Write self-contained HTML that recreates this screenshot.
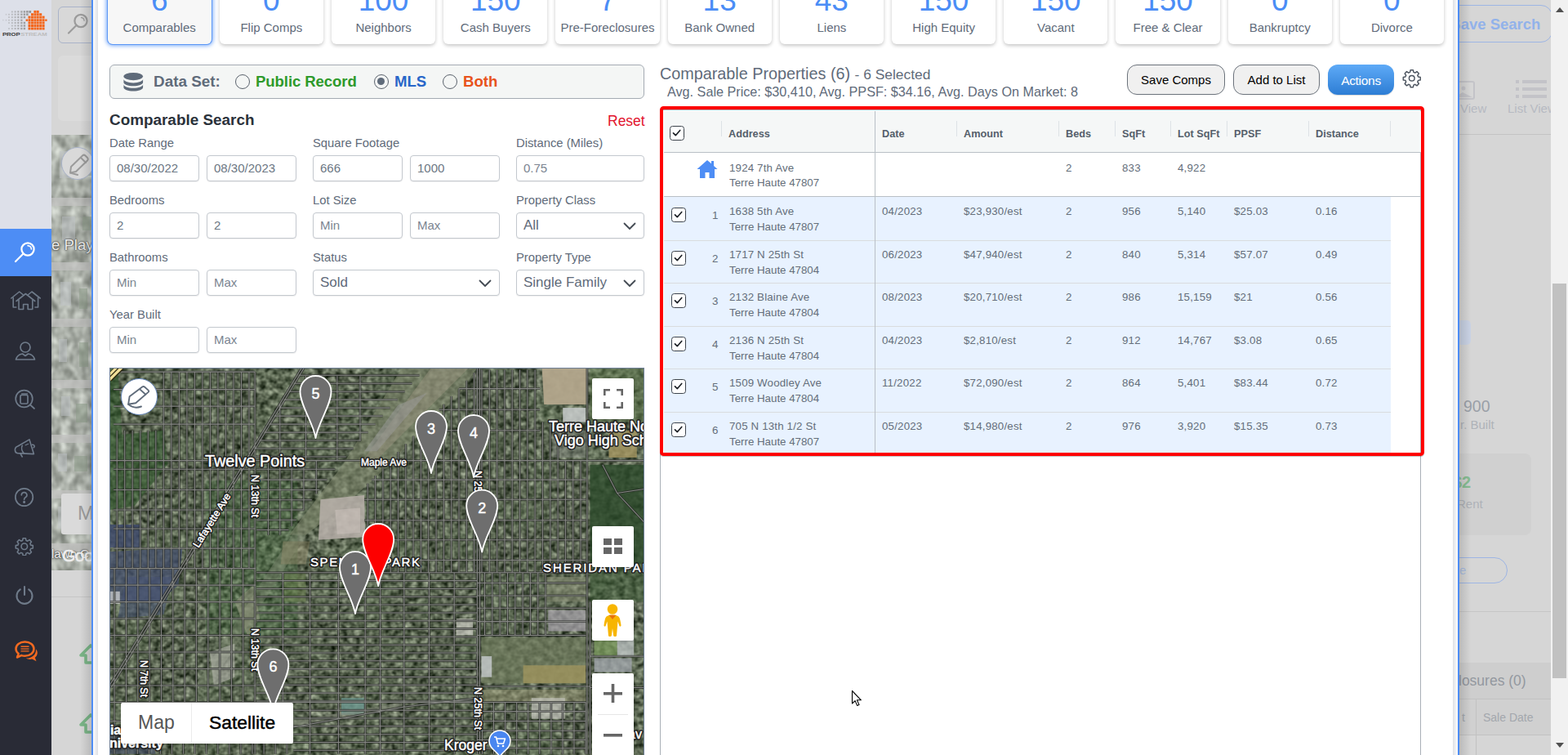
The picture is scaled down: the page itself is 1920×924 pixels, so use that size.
<!DOCTYPE html>
<html lang="en">
<head>
<meta charset="utf-8">
<title>PropStream - Comparables</title>
<style>
*{box-sizing:border-box;margin:0;padding:0}
html,body{width:1920px;height:924px;overflow:hidden;background:#d6d6d6;font-family:"Liberation Sans",Arial,sans-serif;color:#5f6b7a}
.abs{position:absolute}
#page{position:absolute;left:0;top:0;width:1920px;height:924px;overflow:hidden;background:#d6d6d6}
/* sidebar */
#side{position:absolute;left:0;top:0;width:63px;height:924px;background:#292b36}
#side .top{position:absolute;left:0;top:0;width:63px;height:280px;background:#dde0e9}
#side .act{position:absolute;left:0;top:280px;width:63px;height:58px;background:#4d8df5}
#side svg{position:absolute}
/* modal */
#modal{position:absolute;left:112px;top:-40px;width:1675px;height:1000px;background:#fff;border:2px solid #4d8df5;border-top:none}
#modal .lg{position:absolute;left:0;top:0;width:6px;height:1000px;background:linear-gradient(90deg,#fdfdfd,#f1f2f5 35%,#dfe1e5)}
#modal .rg{position:absolute;right:0;top:0;width:6px;height:1000px;background:linear-gradient(90deg,#dfe1e5,#f4f5f8 70%,#fdfdfd)}
.card{position:absolute;top:-30px;height:83.700px;width:127.400px;background:#fff;border-radius:6px;box-shadow:0 2px 4px rgba(0,0,0,.22);text-align:center}
.card .n{position:absolute;left:0;right:0;top:10.800px;font-size:37px;line-height:40px;color:#4b8df6}
.card .l{position:absolute;left:-6px;right:-6px;top:53.500px;font-size:15px;line-height:20px;color:#5f6b7a;white-space:nowrap}
.card.sel{background:#f7f7f7;box-shadow:0 0 0 1px #5b97f6,0 0 5px 2px rgba(77,141,245,.75)}
.lbl{position:absolute;font-size:14.800px;line-height:18px;color:#5f6b7a;white-space:nowrap}
.inp{position:absolute;height:32px;border:1px solid #c3c8ce;border-radius:4px;background:#fff;font-size:15px;line-height:30px;padding-left:8px;color:#6c7784;box-shadow:0 1px 1px rgba(0,0,0,.06);white-space:nowrap}
.inp.ph{color:#7b8591}
.inp.sel{font-size:17px;color:#5f6b7a}
.inp.sel svg{position:absolute;right:9px;top:11px}
.btn{position:absolute;top:79px;height:37px;border:1px solid #6b727b;border-radius:12px;background:#f0f0f0;color:#000;font-size:15px;line-height:35px;text-align:center}
/* table */
.th{position:absolute;top:0;height:49px;font-weight:bold;font-size:12.700px;line-height:49px;color:#555f6b;white-space:nowrap}
.sep{position:absolute;top:8px;width:1px;height:16px;background:#dde2e6}
.row{position:absolute;left:0;width:926px;height:53px}
.row.s{background:#fff}
.row .bg{position:absolute;left:0;top:0;width:890px;height:100%;background:#e8f2ff;border-bottom:1px solid #d9dcde}
.c{position:absolute;top:7px;font-size:13.300px;line-height:19px;color:#646e7a;white-space:nowrap}
.cb{position:absolute;width:18px;height:18px;border:1.500px solid #3c434b;border-radius:3.500px;background:#fff}
.cb svg{position:absolute;left:1px;top:1px}
</style>
</head>
<body>
<div id="page">
<div class="abs" style="left:71px;top:8px;width:60px;height:45px;border:1px solid #a9b3c9;border-radius:6px;background:#d8d8d8"></div><svg class="abs" style="left:80px;top:13px" width="32" height="32" viewBox="0 0 32 32" fill="none" stroke="#9b9b9b" stroke-width="2.2" stroke-linecap="round"><circle cx="19" cy="12.500" r="7.600"/><path d="M13.500 18L4 27.500"/><path d="M19.500 8.500a4 4 0 0 1 3.600 3.800" stroke-width="1.300"/></svg><div class="abs" style="left:71px;top:68px;width:60px;height:80px;border-radius:6px;background:#dbdbdb"></div><div class="abs" style="left:63px;top:165px;width:60px;height:533px;background:#a9aba6;overflow:hidden"><svg width="60" height="533" viewBox="0 0 60 533"><defs><filter id="bsat" x="0" y="0" width="100%" height="100%" color-interpolation-filters="sRGB"><feTurbulence type="fractalNoise" baseFrequency="0.09 0.07" numOctaves="2" seed="3"/><feColorMatrix type="matrix" values="0.55 0 0 0 0.39  0.55 0 0 0 0.41  0.55 0 0 0 0.38  0 0 0 0 1"/></filter></defs><rect width="60" height="533" filter="url(#bsat)"/><rect x="0" y="77" width="60" height="10" fill="#c2c2c0" opacity=".75"/><rect x="0" y="156" width="60" height="10" fill="#c2c2c0" opacity=".75"/><rect x="0" y="225" width="60" height="10" fill="#c2c2c0" opacity=".75"/><rect x="0" y="300" width="60" height="10" fill="#c2c2c0" opacity=".75"/><rect x="0" y="367" width="60" height="10" fill="#c2c2c0" opacity=".75"/><rect x="0" y="435" width="60" height="10" fill="#c2c2c0" opacity=".75"/><rect x="0" y="500" width="60" height="10" fill="#c2c2c0" opacity=".75"/><rect x="10" y="20" width="15" height="33" fill="#c0c4c8" opacity=".5"/><rect x="38" y="34" width="14" height="16" fill="#8c9a88" opacity=".55"/><rect x="13" y="100" width="16" height="29" fill="#c0c4c8" opacity=".5"/><rect x="38" y="100" width="11" height="17" fill="#8c9a88" opacity=".55"/><rect x="11" y="180" width="13" height="29" fill="#c0c4c8" opacity=".5"/><rect x="34" y="188" width="10" height="25" fill="#8c9a88" opacity=".55"/><rect x="9" y="250" width="10" height="28" fill="#c0c4c8" opacity=".5"/><rect x="34" y="254" width="11" height="30" fill="#8c9a88" opacity=".55"/><rect x="12" y="320" width="11" height="24" fill="#c0c4c8" opacity=".5"/><rect x="30" y="329" width="14" height="23" fill="#8c9a88" opacity=".55"/><rect x="8" y="390" width="11" height="22" fill="#c0c4c8" opacity=".5"/><rect x="28" y="393" width="16" height="19" fill="#8c9a88" opacity=".55"/><rect x="8" y="455" width="16" height="27" fill="#c0c4c8" opacity=".5"/><rect x="32" y="460" width="11" height="24" fill="#8c9a88" opacity=".55"/></svg></div><div class="abs" style="left:75px;top:180px;width:40px;height:40px;border-radius:50%;background:#d9d9d9;border:1px solid #a9b3c9"></div><svg class="abs" style="left:82px;top:187px" width="30" height="28" viewBox="0 0 30 28" fill="none" stroke="#9b9b9b" stroke-width="2" stroke-linejoin="round" stroke-linecap="round"><path d="M5 17L19 3.500c1-1 2.500-1 3.500 0l2.500 2.500c1 1 1 2.500 0 3.500L11 23l-7 1.500z"/><path d="M17 6l6 6"/><path d="M4 24.500l9 2.500"/></svg><div class="abs" style="left:63px;top:289px;font-size:18.500px;color:#ececec;text-shadow:0 0 2px #444,0 0 2px #555,0 0 1px #444;white-space:nowrap">e Playl</div><div class="abs" style="left:75px;top:604px;width:50px;height:50px;border-radius:3px;background:#dadada"></div><div class="abs" style="left:95px;top:614px;font-size:24px;color:#9c9c9c">M</div><div class="abs" style="left:63px;top:669px;font-size:15px;color:#eee;text-shadow:0 0 2px #444,0 0 2px #444;white-space:nowrap">lawn C</div><div class="abs" style="left:76px;top:668px;font-size:21px;color:#efefef;white-space:nowrap;letter-spacing:-.5px;-webkit-text-stroke:.5px #efefef">Goo</div><div class="abs" style="left:63px;top:730px;width:60px;height:1px;background:#c6c6c6"></div><svg class="abs" style="left:96px;top:788px" width="26" height="26" viewBox="0 0 26 26" fill="none" stroke="#7ab587" stroke-width="3.600" stroke-linejoin="round"><path d="M3 14L15 2l12 12h-5v9H9v-9z"/></svg><svg class="abs" style="left:96px;top:873px" width="26" height="26" viewBox="0 0 26 26" fill="none" stroke="#7ab587" stroke-width="3.600" stroke-linejoin="round"><path d="M3 14L15 2l12 12h-5v9H9v-9z"/></svg><div class="abs" style="left:98px;top:0;width:14px;height:924px;background:linear-gradient(90deg,rgba(0,0,0,0),rgba(0,0,0,.13))"></div><div class="abs" style="left:1740px;top:6px;width:161px;height:46px;border:1px solid #9db5e4;border-radius:14px"></div><div class="abs" style="left:1776.300px;top:18px;font-size:18.500px;font-weight:bold;color:#92b2ea;white-space:nowrap;line-height:24px">Save Search</div><svg class="abs" style="left:1768px;top:99px" width="40" height="24" viewBox="0 0 40 24" fill="none" stroke="#c3c3c8" stroke-width="2"><rect x="1" y="1" width="36" height="21" rx="2"/><circle cx="24" cy="9" r="2.500" fill="#c3c3c8" stroke="none"/><path d="M3 20l9-8 6 5 5-3 12 6z" fill="#c3c3c8" stroke="none"/></svg><svg class="abs" style="left:1856px;top:98px" width="40" height="24" viewBox="0 0 40 24" fill="#c3c3c8"><rect x="0" y="0" width="4" height="4"/><rect x="8" y="0" width="30" height="4"/><rect x="0" y="9" width="4" height="4"/><rect x="8" y="9" width="30" height="4"/><rect x="0" y="18" width="4" height="4"/><rect x="8" y="18" width="30" height="4"/></svg><div class="abs" style="left:1788px;top:124px;font-size:15px;color:#b6bac2;white-space:nowrap;line-height:18px">View</div><div class="abs" style="left:1846px;top:124px;font-size:15px;color:#b6bac2;white-space:nowrap;line-height:18px">List View</div><div class="abs" style="left:1787px;top:164px;width:112px;height:1px;background:#c3c3c3"></div><div class="abs" style="left:1760px;top:392px;width:41px;height:30px;border-radius:5px;background:#c9d2e4"></div><div class="abs" style="left:1792px;top:485px;font-size:19.5px;color:#9aa0a8;line-height:24px">900</div><div class="abs" style="left:1788px;top:511px;font-size:15px;color:#aeb2b8;white-space:nowrap;line-height:18px">r. Built</div><div class="abs" style="left:1700px;top:555px;width:175px;height:100px;border-radius:8px;background:#d0d0d0"></div><div class="abs" style="left:1779px;top:578px;font-size:20px;font-weight:bold;color:#87bd93;line-height:24px">$2</div><div class="abs" style="left:1784px;top:608px;font-size:15px;color:#aeb2b8;line-height:18px">Rent</div><div class="abs" style="left:1700px;top:682px;width:146px;height:32px;border:1px solid #9db5e4;border-radius:16px"></div><div class="abs" style="left:1787px;top:689px;font-size:15px;color:#a9bce0;line-height:18px">e</div><div class="abs" style="left:1787px;top:748px;width:112px;height:1px;background:#c6c6c6"></div><div class="abs" style="left:1787px;top:811px;width:112px;height:44px;background:#cecece"></div><div class="abs" style="left:1786px;top:822px;font-size:17.500px;color:#93989f;white-space:nowrap;line-height:22px">losures (0)</div><div class="abs" style="left:1787px;top:855px;width:112px;height:45px;background:#d0d0d0;border-top:1px solid #c2c2c2;border-bottom:1px solid #c2c2c2"></div><div class="abs" style="left:1807px;top:856px;width:1px;height:68px;background:#c2c2c2"></div><div class="abs" style="left:1790px;top:869px;font-size:14px;color:#a3a7ad;line-height:18px">t</div><div class="abs" style="left:1816px;top:869px;font-size:14px;color:#a3a7ad;white-space:nowrap;line-height:18px">Sale Date</div><div class="abs" style="left:1787px;top:0;width:14px;height:924px;background:linear-gradient(90deg,rgba(0,0,0,.13),rgba(0,0,0,0))"></div><div class="abs" style="left:1899px;top:0;width:21px;height:924px;background:#f1f1f1"></div><div class="abs" style="left:1901px;top:347px;width:17px;height:483px;background:#c1c1c1"></div><svg class="abs" style="left:1903.500px;top:8px" width="12" height="8" viewBox="0 0 12 8"><path d="M6 1l5 6H1z" fill="#505050"/></svg><svg class="abs" style="left:1903.500px;top:908px" width="12" height="8" viewBox="0 0 12 8"><path d="M6 7l5-6H1z" fill="#505050"/></svg>
<div id="side"><div class="top"></div><div class="act"></div><svg class="abs" style="left:0;top:0" width="63" height="50" viewBox="0 0 63 50"><rect x="13.9" y="13.5" width="1.9" height="1.9" fill="#8f8f8f" opacity="0.47"/><rect x="17.6" y="13.4" width="2.0" height="2.0" fill="#8f8f8f" opacity="0.56"/><rect x="21.3" y="13.3" width="2.1" height="2.1" fill="#8f8f8f" opacity="0.65"/><rect x="25.2" y="13.3" width="2.3" height="2.3" fill="#8f8f8f" opacity="0.73"/><rect x="28.7" y="13.2" width="2.4" height="2.4" fill="#8f8f8f" opacity="0.82"/><rect x="32.1" y="13.1" width="2.5" height="2.5" fill="#8f8f8f" opacity="0.90"/><rect x="35.4" y="13.1" width="2.7" height="2.7" fill="#8f8f8f" opacity="0.98"/><rect x="6.7" y="16.9" width="1.6" height="1.6" fill="#8f8f8f" opacity="0.30"/><rect x="10.1" y="16.8" width="1.8" height="1.8" fill="#8f8f8f" opacity="0.39"/><rect x="13.9" y="16.8" width="1.9" height="1.9" fill="#8f8f8f" opacity="0.47"/><rect x="17.6" y="16.7" width="2.0" height="2.0" fill="#8f8f8f" opacity="0.56"/><rect x="21.3" y="16.6" width="2.1" height="2.1" fill="#8f8f8f" opacity="0.65"/><rect x="25.2" y="16.6" width="2.3" height="2.3" fill="#8f8f8f" opacity="0.73"/><rect x="28.7" y="16.5" width="2.4" height="2.4" fill="#8f8f8f" opacity="0.82"/><rect x="32.1" y="16.4" width="2.5" height="2.5" fill="#8f8f8f" opacity="0.90"/><rect x="10.1" y="20.2" width="1.8" height="1.8" fill="#8f8f8f" opacity="0.39"/><rect x="13.9" y="20.2" width="1.9" height="1.9" fill="#8f8f8f" opacity="0.47"/><rect x="17.6" y="20.1" width="2.0" height="2.0" fill="#8f8f8f" opacity="0.56"/><rect x="21.3" y="20.0" width="2.1" height="2.1" fill="#8f8f8f" opacity="0.65"/><rect x="25.2" y="20.0" width="2.3" height="2.3" fill="#8f8f8f" opacity="0.73"/><rect x="28.7" y="19.9" width="2.4" height="2.4" fill="#8f8f8f" opacity="0.82"/><rect x="3.1" y="23.9" width="1.5" height="1.5" fill="#8f8f8f" opacity="0.22"/><rect x="6.7" y="23.9" width="1.6" height="1.6" fill="#8f8f8f" opacity="0.30"/><rect x="10.1" y="23.8" width="1.8" height="1.8" fill="#8f8f8f" opacity="0.39"/><rect x="13.9" y="23.8" width="1.9" height="1.9" fill="#8f8f8f" opacity="0.47"/><rect x="17.6" y="23.7" width="2.0" height="2.0" fill="#8f8f8f" opacity="0.56"/><rect x="21.3" y="23.6" width="2.1" height="2.1" fill="#8f8f8f" opacity="0.65"/><rect x="25.2" y="23.6" width="2.3" height="2.3" fill="#8f8f8f" opacity="0.73"/><rect x="10.1" y="27.1" width="1.8" height="1.8" fill="#8f8f8f" opacity="0.39"/><rect x="13.9" y="27.1" width="1.9" height="1.9" fill="#8f8f8f" opacity="0.47"/><rect x="17.6" y="27.0" width="2.0" height="2.0" fill="#8f8f8f" opacity="0.56"/><rect x="21.3" y="26.9" width="2.1" height="2.1" fill="#8f8f8f" opacity="0.65"/><rect x="25.2" y="26.9" width="2.3" height="2.3" fill="#8f8f8f" opacity="0.73"/><rect x="28.7" y="26.8" width="2.4" height="2.4" fill="#8f8f8f" opacity="0.82"/><rect x="13.9" y="30.6" width="1.9" height="1.9" fill="#8f8f8f" opacity="0.47"/><rect x="17.6" y="30.5" width="2.0" height="2.0" fill="#8f8f8f" opacity="0.56"/><rect x="21.3" y="30.4" width="2.1" height="2.1" fill="#8f8f8f" opacity="0.65"/><rect x="25.2" y="30.4" width="2.3" height="2.3" fill="#8f8f8f" opacity="0.73"/><rect x="28.7" y="30.3" width="2.4" height="2.4" fill="#8f8f8f" opacity="0.82"/><rect x="10.1" y="34.1" width="1.8" height="1.8" fill="#8f8f8f" opacity="0.39"/><rect x="13.9" y="34.1" width="1.9" height="1.9" fill="#8f8f8f" opacity="0.47"/><rect x="17.6" y="34.0" width="2.0" height="2.0" fill="#8f8f8f" opacity="0.56"/><rect x="21.3" y="33.9" width="2.1" height="2.1" fill="#8f8f8f" opacity="0.65"/><rect x="25.2" y="33.9" width="2.3" height="2.3" fill="#8f8f8f" opacity="0.73"/><rect x="28.7" y="33.8" width="2.4" height="2.4" fill="#8f8f8f" opacity="0.82"/><rect x="41.4" y="12.9" width="3.0" height="3.0" fill="#f4661b"/><rect x="44.7" y="12.9" width="3.0" height="3.0" fill="#f4661b"/><rect x="38.0" y="16.2" width="3.0" height="3.0" fill="#f4661b"/><rect x="41.4" y="16.2" width="3.0" height="3.0" fill="#f4661b"/><rect x="44.7" y="16.2" width="3.0" height="3.0" fill="#f4661b"/><rect x="48.2" y="16.2" width="3.0" height="3.0" fill="#f4661b"/><rect x="34.5" y="19.6" width="3.0" height="3.0" fill="#f4661b"/><rect x="38.0" y="19.6" width="3.0" height="3.0" fill="#f4661b"/><rect x="41.4" y="19.6" width="3.0" height="3.0" fill="#f4661b"/><rect x="44.7" y="19.6" width="3.0" height="3.0" fill="#f4661b"/><rect x="48.2" y="19.6" width="3.0" height="3.0" fill="#f4661b"/><rect x="51.6" y="19.6" width="3.0" height="3.0" fill="#f4661b"/><rect x="31.6" y="23.5" width="2.4" height="2.4" fill="#f4661b"/><rect x="34.5" y="23.2" width="3.0" height="3.0" fill="#f4661b"/><rect x="38.0" y="23.2" width="3.0" height="3.0" fill="#f4661b"/><rect x="41.4" y="23.2" width="3.0" height="3.0" fill="#f4661b"/><rect x="44.7" y="23.2" width="3.0" height="3.0" fill="#f4661b"/><rect x="48.2" y="23.2" width="3.0" height="3.0" fill="#f4661b"/><rect x="51.6" y="23.2" width="3.0" height="3.0" fill="#f4661b"/><rect x="55.2" y="23.5" width="2.4" height="2.4" fill="#f4661b"/><rect x="34.5" y="26.5" width="3.0" height="3.0" fill="#f4661b"/><rect x="38.0" y="26.5" width="3.0" height="3.0" fill="#f4661b"/><rect x="41.4" y="26.5" width="3.0" height="3.0" fill="#f4661b"/><rect x="44.7" y="26.5" width="3.0" height="3.0" fill="#f4661b"/><rect x="48.2" y="26.5" width="3.0" height="3.0" fill="#f4661b"/><rect x="51.6" y="26.5" width="3.0" height="3.0" fill="#f4661b"/><rect x="34.5" y="30.0" width="3.0" height="3.0" fill="#f4661b"/><rect x="38.0" y="30.0" width="3.0" height="3.0" fill="#f4661b"/><rect x="41.4" y="30.0" width="3.0" height="3.0" fill="#f4661b"/><rect x="44.7" y="30.0" width="3.0" height="3.0" fill="#f4661b"/><rect x="48.2" y="30.0" width="3.0" height="3.0" fill="#f4661b"/><rect x="51.6" y="30.0" width="3.0" height="3.0" fill="#f4661b"/><rect x="34.5" y="33.5" width="3.0" height="3.0" fill="#f4661b"/><rect x="38.0" y="33.5" width="3.0" height="3.0" fill="#f4661b"/><rect x="41.4" y="33.5" width="3.0" height="3.0" fill="#f4661b"/><rect x="44.7" y="33.5" width="3.0" height="3.0" fill="#f4661b"/><rect x="48.2" y="33.5" width="3.0" height="3.0" fill="#f4661b"/><rect x="51.6" y="33.5" width="3.0" height="3.0" fill="#f4661b"/><text x="2.900" y="43.800" font-family="Liberation Sans, sans-serif" font-size="5" font-weight="bold" fill="#3a3a3a" textLength="21.800" lengthAdjust="spacingAndGlyphs">PROP</text><text x="25.200" y="43.800" font-family="Liberation Sans, sans-serif" font-size="5" font-weight="bold" fill="#bcbcbc" textLength="32.600" lengthAdjust="spacingAndGlyphs">STREAM</text></svg><svg style="left:15px;top:292px" width="32" height="32" viewBox="0 0 32 32" fill="none" stroke="#fff" stroke-width="2.2" stroke-linecap="round"><circle cx="19" cy="13" r="7.6"/><path d="M13.5 18.5L4 28"/><path d="M19 8.6a4.4 4.4 0 0 1 4.4 4.4" stroke-width="1.6"/></svg><svg style="left:13px;top:355px" width="37" height="26" viewBox="0 0 37 26" fill="none" stroke="#6f7b8a" stroke-width="1.600" stroke-linejoin="round" stroke-linecap="round"><path d="M.8 10L10.700 2l4.300 3.500"/><path d="M3.200 9.500V21h3.600"/><path d="M36.200 10L26 2l-4.300 3.500"/><path d="M33.600 9.500V21H30"/><path d="M7 13.500L18.400 4.500l11.400 9"/><path d="M10 12.500v11h5.600v-6h5.600v6h5.600v-11"/></svg><svg style="left:17px;top:416px" width="28" height="28" viewBox="0 0 28 28" fill="none" stroke="#6f7b8a" stroke-width="1.7" stroke-linejoin="round"><circle cx="14" cy="9" r="6"/><path d="M2.5 24c1-4 4.5-6.5 8-7l3.5 2.5 3.500-2.500c3.500.5 7 3 8 7z"/></svg><svg style="left:14.500px;top:475px" width="30" height="30" viewBox="0 0 30 30" fill="none" stroke="#6f7b8a" stroke-width="1.700" stroke-linecap="round"><circle cx="14.500" cy="13" r="10.300"/><path d="M22 20.500l5 4.500"/><rect x="10" y="8.500" width="9" height="10.500" rx="1.500"/><path d="M11.500 7h7" stroke-width="1.300"/></svg><svg style="left:16px;top:533px" width="30" height="30" viewBox="0 0 30 30" fill="none" stroke="#6f7b8a" stroke-width="1.600" stroke-linejoin="round" stroke-linecap="round"><path d="M5.500 13.300L20 4.900l5.400 17.700-20-1c-3.600-.4-4.400-6.700.1-8.300z"/><path d="M11.200 12.300c-1.200 2.700-.6 6.800 2 9.300"/><path d="M8.900 22l2.300 4"/><path d="M23.500 11.300c2.300-.6 3.800 2.200 1.600 3.600"/><path d="M15.200 11.800l3.500-1.500" stroke-width="1.200"/></svg><svg style="left:17px;top:596px" width="26" height="26" viewBox="0 0 26 26" fill="none" stroke="#6f7b8a" stroke-width="1.700" stroke-linecap="round"><circle cx="12.600" cy="12.500" r="10.700"/><path d="M9.300 9.800a3.300 3.300 0 1 1 4.800 3c-1 .6-1.500 1.200-1.500 2.500"/><circle cx="12.600" cy="18.400" r=".7" fill="#6f7b8a"/></svg><svg style="left:18px;top:656.500px" width="23.600" height="23.600" viewBox="0 0 24 24" fill="none" stroke="#6f7b8a" stroke-width="1.600" stroke-linejoin="round"><circle cx="12" cy="12" r="3.800"/><path d="M10.300 1.800h3.400l.5 2.700 1.900.8 2.300-1.600 2.400 2.400-1.600 2.300.8 1.900 2.700.5v3.400l-2.700.5-.8 1.900 1.600 2.300-2.400 2.400-2.300-1.600-1.900.8-.5 2.700h-3.400l-.5-2.700-1.900-.8-2.300 1.600-2.400-2.400 1.600-2.300-.8-1.900-2.700-.5v-3.400l2.700-.5.8-1.900-1.600-2.300 2.400-2.400 2.300 1.600 1.900-.8z"/></svg><svg style="left:16.600px;top:716px" width="26" height="26" viewBox="0 0 26 26" fill="none" stroke="#6f7b8a" stroke-width="2.100" stroke-linecap="round"><path d="M13 2v10"/><path d="M7.800 5.400a9.500 9.500 0 1 0 10.400 0"/></svg><svg style="left:18.400px;top:784px" width="32" height="30" viewBox="0 0 32 30"><path d="M12.500 1.500C6.200 1.500 1.500 5.200 1.500 9.900c0 2.400 1.200 4.500 3.200 6L3 20.500l5.200-2.400c1.400.4 2.800.6 4.300.6 6.300 0 11-3.800 11-8.600S18.800 1.500 12.500 1.500z" fill="none" stroke="#f26a21" stroke-width="2.500" stroke-linejoin="round"/><path d="M7.500 7.300h10M7.500 10.100h10M7.500 12.900h10" stroke="#f26a21" stroke-width="1.400"/><path d="M26 10.500c3 3 2 8-1.200 10.300l1.700 4.400-5.200-2.600c-2.800.7-5.500.2-7.600-1 6.800.4 13-4.300 12.300-11.100z" fill="#f26a21"/></svg></div>
<div id="modal"><div class="lg"></div><div class="rg"></div></div><div class="card sel" style="left:131.5px"><div class="n">6</div><div class="l">Comparables</div></div><div class="card" style="left:268.7px"><div class="n">0</div><div class="l">Flip Comps</div></div><div class="card" style="left:405.9px"><div class="n">100</div><div class="l">Neighbors</div></div><div class="card" style="left:543.1px"><div class="n">150</div><div class="l">Cash Buyers</div></div><div class="card" style="left:680.3px"><div class="n">7</div><div class="l">Pre-Foreclosures</div></div><div class="card" style="left:817.5px"><div class="n">13</div><div class="l">Bank Owned</div></div><div class="card" style="left:954.7px"><div class="n">43</div><div class="l">Liens</div></div><div class="card" style="left:1091.9px"><div class="n">150</div><div class="l">High Equity</div></div><div class="card" style="left:1229.1px"><div class="n">150</div><div class="l">Vacant</div></div><div class="card" style="left:1366.3px"><div class="n">150</div><div class="l">Free &amp; Clear</div></div><div class="card" style="left:1503.5px"><div class="n">0</div><div class="l">Bankruptcy</div></div><div class="card" style="left:1640.7px"><div class="n">0</div><div class="l">Divorce</div></div><div class="abs" style="left:134px;top:79px;width:655px;height:42px;border:1px solid #a4abb3;border-radius:6px;background:#f4f6f5"></div><svg class="abs" style="left:149.500px;top:88px" width="26.500" height="24" viewBox="0 0 28 26" preserveAspectRatio="none" fill="#5f6b7a"><ellipse cx="14" cy="6" rx="12.500" ry="5"/><path d="M1.500 9.500c0 2.800 5.600 5 12.500 5s12.500-2.200 12.500-5v4.200c0 2.800-5.600 5-12.500 5s-12.500-2.200-12.500-5z"/><path d="M1.500 16.500c0 2.800 5.600 5 12.500 5s12.500-2.200 12.500-5v4c0 2.800-5.600 5-12.500 5s-12.500-2.200-12.500-5z"/></svg><div class="abs" style="left:188px;top:88px;font-size:18.900px;line-height:24px;font-weight:bold;color:#5f6b7a;white-space:nowrap">Data Set:</div><div class="abs" style="left:288px;top:91px;width:18px;height:18px;border:1.300px solid #5a626c;border-radius:50%"></div><div class="abs" style="left:313px;top:88px;font-size:18.600px;line-height:24px;font-weight:bold;color:#2e9a2b;white-space:nowrap;letter-spacing:-.1px">Public Record</div><div class="abs" style="left:458px;top:91px;width:18px;height:18px;border:1.300px solid #5a626c;border-radius:50%"><div class="abs" style="left:3.200px;top:3.200px;width:9px;height:9px;border-radius:50%;background:#5f6b7a"></div></div><div class="abs" style="left:483px;top:88px;font-size:18.600px;line-height:24px;font-weight:bold;color:#2866c9;white-space:nowrap">MLS</div><div class="abs" style="left:542px;top:91px;width:18px;height:18px;border:1.300px solid #5a626c;border-radius:50%"></div><div class="abs" style="left:567px;top:88px;font-size:18.600px;line-height:24px;font-weight:bold;color:#e8531c;white-space:nowrap">Both</div><div class="abs" style="left:134px;top:135px;font-size:18.900px;line-height:24px;font-weight:bold;color:#2b323b;white-space:nowrap">Comparable Search</div><div class="abs" style="left:744px;top:136px;font-size:17.500px;line-height:24px;color:#e2142d;white-space:nowrap">Reset</div><div class="lbl" style="left:134px;top:166px">Date Range</div><div class="inp" style="left:134px;top:190px;width:110px">08/30/2022</div><div class="inp" style="left:253px;top:190px;width:110px">08/30/2023</div><div class="lbl" style="left:383px;top:166px">Square Footage</div><div class="inp" style="left:383px;top:190px;width:110px">666</div><div class="inp" style="left:502px;top:190px;width:110px">1000</div><div class="lbl" style="left:632px;top:166px">Distance (Miles)</div><div class="inp ph" style="left:632px;top:190px;width:157px">0.75</div><div class="lbl" style="left:134px;top:236px">Bedrooms</div><div class="inp" style="left:134px;top:260px;width:110px">2</div><div class="inp" style="left:253px;top:260px;width:110px">2</div><div class="lbl" style="left:383px;top:236px">Lot Size</div><div class="inp ph" style="left:383px;top:260px;width:110px">Min</div><div class="inp ph" style="left:502px;top:260px;width:110px">Max</div><div class="lbl" style="left:632px;top:236px">Property Class</div><div class="inp sel" style="left:632px;top:260px;width:157px">All<svg width="16" height="10" viewBox="0 0 16 10" fill="none" stroke="#444b54" stroke-width="1.800" stroke-linecap="round" stroke-linejoin="round"><path d="M1.500 1.500L8 8l6.500-6.500"/></svg></div><div class="lbl" style="left:134px;top:306px">Bathrooms</div><div class="inp ph" style="left:134px;top:330px;width:110px">Min</div><div class="inp ph" style="left:253px;top:330px;width:110px">Max</div><div class="lbl" style="left:383px;top:306px">Status</div><div class="inp sel" style="left:383px;top:330px;width:229px">Sold<svg width="16" height="10" viewBox="0 0 16 10" fill="none" stroke="#444b54" stroke-width="1.800" stroke-linecap="round" stroke-linejoin="round"><path d="M1.500 1.500L8 8l6.500-6.500"/></svg></div><div class="lbl" style="left:632px;top:306px">Property Type</div><div class="inp sel" style="left:632px;top:330px;width:157px">Single Family<svg width="16" height="10" viewBox="0 0 16 10" fill="none" stroke="#444b54" stroke-width="1.800" stroke-linecap="round" stroke-linejoin="round"><path d="M1.500 1.500L8 8l6.500-6.500"/></svg></div><div class="lbl" style="left:134px;top:376px">Year Built</div><div class="inp ph" style="left:134px;top:400px;width:110px">Min</div><div class="inp ph" style="left:253px;top:400px;width:110px">Max</div><svg class="abs" style="left:134px;top:450px" width="655" height="474" viewBox="0 0 655 474"><defs>
<filter id="sat" x="0" y="0" width="100%" height="100%" color-interpolation-filters="sRGB">
<feTurbulence type="fractalNoise" baseFrequency="0.13 0.15" numOctaves="2" seed="4" result="n"/>
<feColorMatrix in="n" type="matrix" values="0.85 0 0 0 -0.075  0.85 0 0 0 -0.035  0.8 0 0 0 -0.085  0 0 0 0 1"/>
</filter>
<filter id="sat2" x="0" y="0" width="100%" height="100%" color-interpolation-filters="sRGB">
<feTurbulence type="fractalNoise" baseFrequency="0.02 0.025" numOctaves="2" seed="21" result="n"/>
<feColorMatrix in="n" type="matrix" values="0 0 0 0 0.45  0 0 0 0 0.55  0 0 0 0 0.40  0 2.4 0 0 -0.95"/>
</filter>
<clipPath id="mc"><rect width="655" height="474"/></clipPath>
</defs><g clip-path="url(#mc)"><rect width="655" height="474" fill="#566451"/><rect width="655" height="474" filter="url(#sat)"/><rect width="655" height="474" filter="url(#sat2)" opacity=".3"/><polygon points="0.0,0.0 10.2,0.0 15.4,81.9 66.5,76.8 71.6,117.7 30.7,168.9 0.0,174.0" fill="#2f5a2c" opacity="0.55"/><polygon points="117.7,138.2 230.3,138.2 230.3,327.5 117.7,327.5" fill="#3c6a38" opacity="0.28"/><polygon points="358.2,0.0 450.3,0.0 429.8,30.7 327.5,133.0 286.6,168.9 240.5,204.7 220.0,204.7 286.6,117.7" fill="#7f876c" opacity="0.6"/><polygon points="394.0,0.0 440.1,0.0 327.5,112.6 307.0,117.7" fill="#9c9580" opacity="0.45"/><polygon points="353.1,46.1 388.9,30.7 327.5,102.3 312.1,102.3" fill="#9a9a9a" opacity="0.5"/><polygon points="240.5,204.7 225.2,202.1 104.9,388.9 120.3,394.0" fill="#76826a" opacity="0.5"/><polygon points="153.5,286.6 176.5,266.1 184.2,307.0 168.9,327.5" fill="#9a9a84" opacity="0.5"/><polygon points="122.8,348.0 153.5,337.7 153.5,378.7 127.9,388.9" fill="#b9b9b2" opacity="0.55"/><polygon points="258.4,161.2 312.1,156.1 313.2,207.2 255.9,210.8" fill="#b9b0aa" opacity="0.85"/><polygon points="276.3,174.0 307.0,171.4 307.0,202.1 278.9,203.7" fill="#cfc6c0" opacity="0.5"/><polygon points="212.4,212.4 245.6,212.4 240.5,240.5 209.8,240.5" fill="#8f8a6a" opacity="0.5"/><polygon points="212.4,250.7 240.5,250.7 240.5,286.6 212.4,286.6" fill="#6d8450" opacity="0.5"/><polygon points="0.0,191.9 38.4,191.9 38.4,220.0 0.0,220.0" fill="#3f4a6e" opacity="0.8"/><polygon points="0.0,225.2 89.6,220.0 84.4,266.1 61.4,286.6 0.0,286.6" fill="#46506f" opacity="0.75"/><polygon points="20.5,255.9 76.8,255.9 66.5,301.9 10.2,307.0" fill="#4a5574" opacity="0.6"/><polygon points="0.0,273.8 12.8,273.8 12.8,289.1 0.0,289.1" fill="#d8d8d8" opacity="0.7"/><polygon points="0.0,450.3 56.3,450.3 56.3,472.8 0.0,472.8" fill="#39435f" opacity="0.6"/><polygon points="529.6,0.0 584.4,0.0 584.4,45.0 532.2,45.0" fill="#b3a78c" opacity="0.95"/><polygon points="555.2,49.1 583.4,49.1 583.4,66.5 555.2,66.5" fill="#c9cdcc" opacity="0.85"/><polygon points="588.5,0.0 655.0,0.0 655.0,66.5 588.5,66.5" fill="#5f7a4e" opacity="0.5"/><polygon points="611.5,76.8 645.8,76.8 645.8,110.0 611.5,110.0" fill="#a89863" opacity="0.8"/><polygon points="542.4,76.8 583.4,76.8 583.4,110.0 542.4,110.0" fill="#8a8f88" opacity="0.45"/><polygon points="588.5,118.7 655.0,118.7 655.0,240.5 588.5,240.5" fill="#2c4a2a" opacity="0.8"/><polygon points="588.5,240.5 655.0,240.5 655.0,286.6 588.5,286.6" fill="#3c5a36" opacity="0.5"/><polygon points="534.7,255.9 583.4,255.9 583.4,286.6 534.7,286.6" fill="#8c9278" opacity="0.55"/><polygon points="537.3,296.8 583.4,296.8 583.4,322.4 537.3,322.4" fill="#a8a3ac" opacity="0.7"/><polygon points="593.6,332.6 621.7,332.6 621.7,353.1 593.6,353.1" fill="#7fa060" opacity="0.7"/><polygon points="621.7,327.5 642.2,327.5 642.2,353.1 621.7,353.1" fill="#c8ccd0" opacity="0.7"/><polygon points="593.6,355.6 639.6,355.6 639.6,372.5 593.6,372.5" fill="#a4a8b0" opacity="0.75"/><polygon points="455.4,330.1 583.4,330.1 583.4,386.3 455.4,386.3" fill="#6f7a5c" opacity="0.7"/><polygon points="506.6,364.3 583.4,364.3 583.4,386.3 506.6,386.3" fill="#a3975f" opacity="0.75"/><polygon points="455.4,353.1 468.2,353.1 468.2,378.7 455.4,378.7" fill="#d5d8e0" opacity="0.7"/><polygon points="452.9,394.0 583.4,394.0 583.4,409.4 452.9,409.4" fill="#9c9a78" opacity="0.5"/><polygon points="516.8,404.3 557.8,404.3 557.8,429.8 516.8,429.8" fill="#c9c9c2" opacity="0.7"/><polygon points="424.7,307.0 445.2,307.0 445.2,327.5 424.7,327.5" fill="#cfcfc6" opacity="0.7"/><polygon points="284.0,404.3 312.1,404.3 312.1,424.7 284.0,424.7" fill="#6f9a92" opacity="0.8"/><polygon points="225.2,432.4 358.2,409.4 358.2,417.1 225.2,440.1" fill="#8a8d80" opacity="0.5"/><path d="M9.2 76.8V245.6M18.7 76.8V245.6M28.2 76.8V245.6M37.8 76.8V245.6M47.3 76.8V245.6M56.8 76.8V245.6M66.3 5.1V245.6M75.8 5.1V245.6M85.4 5.1V245.6M94.9 5.1V245.6M104.4 5.1V245.6M113.9 5.1V245.6M123.4 5.1V245.6M132.9 5.1V245.6M142.5 5.1V245.6M152.0 5.1V245.6M161.5 5.1V245.6M171.0 5.1V245.6M5.1 5.1H178.1M5.1 26.6H178.1M5.1 47.1H178.1M5.1 69.1H178.1M5.1 113.6H178.1M5.1 124.3H178.1M5.1 149.4H178.1M5.1 174.0H178.1M5.1 197.0H178.1M5.1 221.1H178.1M5.1 245.6H178.1M231.9 9.2H379.6M225.8 19.2H370.6M219.8 29.2H361.6M213.7 39.1H352.7M207.7 49.1H343.7M201.7 59.1H334.7M195.6 69.1H325.7M189.6 79.1H316.7M183.5 89.0H307.7M179.1 99.0H298.8M179.1 109.0H289.8M208.8 44.0V113.6M240.5 10.2V113.6M278.9 10.2V113.6M307.0 10.2V89.8M180.1 124.3H276.4M180.1 137.1H266.6M180.1 149.4H257.2M180.1 161.7H247.8M180.1 174.0H238.4M180.1 186.3H229.0M180.1 198.5H219.6M194.5 113.6V204.7M208.8 113.6V204.7M223.1 113.6V194.0M237.9 113.6V174.6M253.3 113.6V154.5M316.2 141.8V250.7M325.6 132.1V250.7M334.9 122.4V250.7M344.2 112.7V250.7M353.5 103.0V250.7M362.8 93.3V250.7M372.1 83.6V250.7M381.4 73.9V250.7M390.7 64.2V250.7M400.1 54.5V250.7M409.4 44.8V250.7M418.7 35.1V250.7M428.0 25.4V250.7M437.3 15.7V250.7M446.6 6.0V250.7M455.9 2.6V250.7M465.3 2.6V250.7M474.6 2.6V250.7M483.9 2.6V250.7M493.2 2.6V250.7M502.5 2.6V250.7M511.8 2.6V250.7M521.1 2.6V250.7M530.4 66.5V250.7M539.8 66.5V250.7M549.1 66.5V250.7M558.4 113.6V250.7M567.7 113.6V250.7M577.0 113.6V250.7M428.3 25.6H527.1M403.7 51.2H527.1M379.2 76.8H527.1M343.8 113.6H583.4M321.2 137.1H583.4M312.1 161.2H583.4M312.1 186.8H583.4M312.1 210.8H583.4M312.1 235.4H583.4M312.1 250.7H583.4M180.1 250.7H450.3M180.1 260.6H450.3M180.1 270.4H450.3M180.1 280.2H450.3M180.1 290.0H450.3M180.1 299.9H450.3M180.1 309.7H450.3M180.1 319.5H450.3M180.1 329.3H450.3M180.1 339.2H450.3M180.1 349.0H450.3M180.1 358.8H450.3M180.1 368.6H450.3M180.1 378.5H450.3M180.1 388.3H450.3M180.1 398.1H450.3M180.1 407.9H450.3M212.4 250.7V409.4M245.6 250.7V409.4M280.4 250.7V409.4M313.2 250.7V409.4M331.6 250.7V409.4M360.8 250.7V409.4M391.5 250.7V409.4M422.2 250.7V409.4M450.3 250.7V409.4M459.5 250.7V327.5M468.8 250.7V327.5M478.1 250.7V327.5M487.5 250.7V327.5M496.8 250.7V327.5M506.1 250.7V327.5M515.4 250.7V327.5M524.7 250.7V327.5M534.0 250.7V327.5M450.3 263.5H583.4M450.3 278.9H583.4M450.3 294.2H583.4M450.3 310.6H583.4M450.3 327.5H583.4M6.1 245.6V409.4M20.5 245.6V409.4M34.8 245.6V409.4M49.1 245.6V409.4M63.5 245.6V409.4M77.8 245.6V409.4M92.1 245.6V409.4M106.4 245.6V409.4M120.8 245.6V409.4M135.1 245.6V409.4M149.4 245.6V409.4M163.7 245.6V409.4M178.1 245.6V409.4M0.0 245.6H179.1M0.0 266.1H179.1M0.0 286.6H179.1M0.0 307.0H179.1M0.0 327.5H179.1M0.0 348.0H179.1M0.0 368.4H179.1M0.0 388.9H179.1M0.0 409.4H179.1M6.1 409.4V472.8M20.2 409.4V472.8M34.3 409.4V472.8M48.4 409.4V472.8M62.4 409.4V472.8M76.5 409.4V472.8M90.6 409.4V472.8M104.6 409.4V472.8M118.7 409.4V472.8M132.8 409.4V472.8M146.9 409.4V472.8M160.9 409.4V472.8M175.0 409.4V472.8M189.1 409.4V472.8M203.2 409.4V472.8M217.2 409.4V472.8M456.5 409.4V472.8M470.5 409.4V472.8M484.6 409.4V472.8M498.7 409.4V472.8M512.7 409.4V472.8M526.8 409.4V472.8M540.9 409.4V472.8M555.0 409.4V472.8M569.0 409.4V472.8M583.1 409.4V472.8M0.0 409.4H225.2M450.3 409.4H583.4M0.0 432.4H225.2M450.3 432.4H583.4M0.0 455.4H225.2M450.3 455.4H583.4M450.3 420.6H583.4M450.3 444.2H583.4M450.3 465.7H583.4M225.2 409.4H450.3M225.2 419.2H450.3M225.2 429.0H450.3M225.2 438.8H450.3M225.2 448.7H450.3M225.2 458.5H450.3M225.2 468.3H450.3M245.6 409.4V472.8M280.4 409.4V472.8M313.2 409.4V472.8M331.6 409.4V472.8M360.8 409.4V472.8M391.5 409.4V472.8M422.2 409.4V472.8M584.9 0.0V472.8M588.5 286.6V472.8M584.9 113.6H655.0M588.5 391.5H655.0M588.5 353.1H655.0M603.8 118.7L621.7 153.5M621.7 153.5L655.0 148.4M621.7 153.5L655.0 189.3M235.4 0.0L0.0 388.9M238.5 0.0L2.0 391.5M0.0 113.6H655.0M178.1 5.1V472.8M450.3 0.0V472.8M453.4 0.0V472.8M450.3 389.9H588.5M225.2 440.1L358.2 415.5M358.2 415.5L450.3 404.3" fill="none" stroke="#262826" stroke-width="2.900" opacity=".72"/><path d="M9.2 76.8V245.6M18.7 76.8V245.6M28.2 76.8V245.6M37.8 76.8V245.6M47.3 76.8V245.6M56.8 76.8V245.6M66.3 5.1V245.6M75.8 5.1V245.6M85.4 5.1V245.6M94.9 5.1V245.6M104.4 5.1V245.6M113.9 5.1V245.6M123.4 5.1V245.6M132.9 5.1V245.6M142.5 5.1V245.6M152.0 5.1V245.6M161.5 5.1V245.6M171.0 5.1V245.6M5.1 5.1H178.1M5.1 26.6H178.1M5.1 47.1H178.1M5.1 69.1H178.1M5.1 113.6H178.1M5.1 124.3H178.1M5.1 149.4H178.1M5.1 174.0H178.1M5.1 197.0H178.1M5.1 221.1H178.1M5.1 245.6H178.1M231.9 9.2H379.6M225.8 19.2H370.6M219.8 29.2H361.6M213.7 39.1H352.7M207.7 49.1H343.7M201.7 59.1H334.7M195.6 69.1H325.7M189.6 79.1H316.7M183.5 89.0H307.7M179.1 99.0H298.8M179.1 109.0H289.8M208.8 44.0V113.6M240.5 10.2V113.6M278.9 10.2V113.6M307.0 10.2V89.8M180.1 124.3H276.4M180.1 137.1H266.6M180.1 149.4H257.2M180.1 161.7H247.8M180.1 174.0H238.4M180.1 186.3H229.0M180.1 198.5H219.6M194.5 113.6V204.7M208.8 113.6V204.7M223.1 113.6V194.0M237.9 113.6V174.6M253.3 113.6V154.5M316.2 141.8V250.7M325.6 132.1V250.7M334.9 122.4V250.7M344.2 112.7V250.7M353.5 103.0V250.7M362.8 93.3V250.7M372.1 83.6V250.7M381.4 73.9V250.7M390.7 64.2V250.7M400.1 54.5V250.7M409.4 44.8V250.7M418.7 35.1V250.7M428.0 25.4V250.7M437.3 15.7V250.7M446.6 6.0V250.7M455.9 2.6V250.7M465.3 2.6V250.7M474.6 2.6V250.7M483.9 2.6V250.7M493.2 2.6V250.7M502.5 2.6V250.7M511.8 2.6V250.7M521.1 2.6V250.7M530.4 66.5V250.7M539.8 66.5V250.7M549.1 66.5V250.7M558.4 113.6V250.7M567.7 113.6V250.7M577.0 113.6V250.7M428.3 25.6H527.1M403.7 51.2H527.1M379.2 76.8H527.1M343.8 113.6H583.4M321.2 137.1H583.4M312.1 161.2H583.4M312.1 186.8H583.4M312.1 210.8H583.4M312.1 235.4H583.4M312.1 250.7H583.4M180.1 250.7H450.3M180.1 260.6H450.3M180.1 270.4H450.3M180.1 280.2H450.3M180.1 290.0H450.3M180.1 299.9H450.3M180.1 309.7H450.3M180.1 319.5H450.3M180.1 329.3H450.3M180.1 339.2H450.3M180.1 349.0H450.3M180.1 358.8H450.3M180.1 368.6H450.3M180.1 378.5H450.3M180.1 388.3H450.3M180.1 398.1H450.3M180.1 407.9H450.3M212.4 250.7V409.4M245.6 250.7V409.4M280.4 250.7V409.4M313.2 250.7V409.4M331.6 250.7V409.4M360.8 250.7V409.4M391.5 250.7V409.4M422.2 250.7V409.4M450.3 250.7V409.4M459.5 250.7V327.5M468.8 250.7V327.5M478.1 250.7V327.5M487.5 250.7V327.5M496.8 250.7V327.5M506.1 250.7V327.5M515.4 250.7V327.5M524.7 250.7V327.5M534.0 250.7V327.5M450.3 263.5H583.4M450.3 278.9H583.4M450.3 294.2H583.4M450.3 310.6H583.4M450.3 327.5H583.4M6.1 245.6V409.4M20.5 245.6V409.4M34.8 245.6V409.4M49.1 245.6V409.4M63.5 245.6V409.4M77.8 245.6V409.4M92.1 245.6V409.4M106.4 245.6V409.4M120.8 245.6V409.4M135.1 245.6V409.4M149.4 245.6V409.4M163.7 245.6V409.4M178.1 245.6V409.4M0.0 245.6H179.1M0.0 266.1H179.1M0.0 286.6H179.1M0.0 307.0H179.1M0.0 327.5H179.1M0.0 348.0H179.1M0.0 368.4H179.1M0.0 388.9H179.1M0.0 409.4H179.1M6.1 409.4V472.8M20.2 409.4V472.8M34.3 409.4V472.8M48.4 409.4V472.8M62.4 409.4V472.8M76.5 409.4V472.8M90.6 409.4V472.8M104.6 409.4V472.8M118.7 409.4V472.8M132.8 409.4V472.8M146.9 409.4V472.8M160.9 409.4V472.8M175.0 409.4V472.8M189.1 409.4V472.8M203.2 409.4V472.8M217.2 409.4V472.8M456.5 409.4V472.8M470.5 409.4V472.8M484.6 409.4V472.8M498.7 409.4V472.8M512.7 409.4V472.8M526.8 409.4V472.8M540.9 409.4V472.8M555.0 409.4V472.8M569.0 409.4V472.8M583.1 409.4V472.8M0.0 409.4H225.2M450.3 409.4H583.4M0.0 432.4H225.2M450.3 432.4H583.4M0.0 455.4H225.2M450.3 455.4H583.4M450.3 420.6H583.4M450.3 444.2H583.4M450.3 465.7H583.4M225.2 409.4H450.3M225.2 419.2H450.3M225.2 429.0H450.3M225.2 438.8H450.3M225.2 448.7H450.3M225.2 458.5H450.3M225.2 468.3H450.3M245.6 409.4V472.8M280.4 409.4V472.8M313.2 409.4V472.8M331.6 409.4V472.8M360.8 409.4V472.8M391.5 409.4V472.8M422.2 409.4V472.8M584.9 0.0V472.8M588.5 286.6V472.8M584.9 113.6H655.0M588.5 391.5H655.0M588.5 353.1H655.0M603.8 118.7L621.7 153.5M621.7 153.5L655.0 148.4M621.7 153.5L655.0 189.3M235.4 0.0L0.0 388.9M238.5 0.0L2.0 391.5M0.0 113.6H655.0M178.1 5.1V472.8M450.3 0.0V472.8M453.4 0.0V472.8M450.3 389.9H588.5M225.2 440.1L358.2 415.5M358.2 415.5L450.3 404.3" fill="none" stroke="#868784" stroke-width="1.050" opacity="1"/><path d="M-1 13.500L13.500 -1" stroke="#2e2810" stroke-width="9.500"/><path d="M-1 9.600L9.600 -1" stroke="#f3e09a" stroke-width="3"/><path d="M-1 15.800L15.800 -1" stroke="#f3e09a" stroke-width="3.200"/><g font-family="Liberation Sans, Arial, sans-serif"><text x="117.0" y="121.0" font-size="19.8" font-weight="normal" text-anchor="start" fill="#1c1c1c" stroke="#1c1c1c" stroke-width="3.400" stroke-linejoin="round">Twelve Points</text><text x="117.0" y="121.0" font-size="19.8" font-weight="normal" text-anchor="start" fill="#fff" stroke="#fff" stroke-width=".45">Twelve Points</text><text x="308.0" y="120.0" font-size="12" font-weight="normal" text-anchor="start" fill="#1c1c1c" stroke="#1c1c1c" stroke-width="3.400" stroke-linejoin="round">Maple Ave</text><text x="308.0" y="120.0" font-size="12" font-weight="normal" text-anchor="start" fill="#fff" stroke="#fff" stroke-width=".45">Maple Ave</text><text x="174.0" y="131.0" font-size="12.5" font-weight="normal" text-anchor="start" transform="rotate(90 174.0 131.0)" fill="#1c1c1c" stroke="#1c1c1c" stroke-width="3.400" stroke-linejoin="round">N 13th St</text><text x="174.0" y="131.0" font-size="12.5" font-weight="normal" text-anchor="start" transform="rotate(90 174.0 131.0)" fill="#fff" stroke="#fff" stroke-width=".45">N 13th St</text><text x="174.0" y="319.0" font-size="12.5" font-weight="normal" text-anchor="start" transform="rotate(90 174.0 319.0)" fill="#1c1c1c" stroke="#1c1c1c" stroke-width="3.400" stroke-linejoin="round">N 13th St</text><text x="174.0" y="319.0" font-size="12.5" font-weight="normal" text-anchor="start" transform="rotate(90 174.0 319.0)" fill="#fff" stroke="#fff" stroke-width=".45">N 13th St</text><text x="38.0" y="358.0" font-size="12.5" font-weight="normal" text-anchor="start" transform="rotate(90 38.0 358.0)" fill="#1c1c1c" stroke="#1c1c1c" stroke-width="3.400" stroke-linejoin="round">N 7th St</text><text x="38.0" y="358.0" font-size="12.5" font-weight="normal" text-anchor="start" transform="rotate(90 38.0 358.0)" fill="#fff" stroke="#fff" stroke-width=".45">N 7th St</text><text x="447.0" y="126.0" font-size="12.5" font-weight="normal" text-anchor="start" transform="rotate(90 447.0 126.0)" fill="#1c1c1c" stroke="#1c1c1c" stroke-width="3.400" stroke-linejoin="round">N 25th St</text><text x="447.0" y="126.0" font-size="12.5" font-weight="normal" text-anchor="start" transform="rotate(90 447.0 126.0)" fill="#fff" stroke="#fff" stroke-width=".45">N 25th St</text><text x="447.0" y="391.0" font-size="12.5" font-weight="normal" text-anchor="start" transform="rotate(90 447.0 391.0)" fill="#1c1c1c" stroke="#1c1c1c" stroke-width="3.400" stroke-linejoin="round">N 25th St</text><text x="447.0" y="391.0" font-size="12.5" font-weight="normal" text-anchor="start" transform="rotate(90 447.0 391.0)" fill="#fff" stroke="#fff" stroke-width=".45">N 25th St</text><text x="109.0" y="221.0" font-size="12.5" font-weight="normal" text-anchor="start" transform="rotate(-58 109.0 221.0)" fill="#1c1c1c" stroke="#1c1c1c" stroke-width="3.400" stroke-linejoin="round">Lafayette Ave</text><text x="109.0" y="221.0" font-size="12.5" font-weight="normal" text-anchor="start" transform="rotate(-58 109.0 221.0)" fill="#fff" stroke="#fff" stroke-width=".45">Lafayette Ave</text><text x="246.0" y="243.0" font-size="15" font-weight="normal" text-anchor="start" letter-spacing="1.6" fill="#1c1c1c" stroke="#1c1c1c" stroke-width="3.400" stroke-linejoin="round">SPENCER PARK</text><text x="246.0" y="243.0" font-size="15" font-weight="normal" text-anchor="start" letter-spacing="1.6" fill="#fff" stroke="#fff" stroke-width=".45">SPENCER PARK</text><text x="531.0" y="250.0" font-size="15" font-weight="normal" text-anchor="start" letter-spacing="1.9" fill="#1c1c1c" stroke="#1c1c1c" stroke-width="3.400" stroke-linejoin="round">SHERIDAN PARK</text><text x="531.0" y="250.0" font-size="15" font-weight="normal" text-anchor="start" letter-spacing="1.9" fill="#fff" stroke="#fff" stroke-width=".45">SHERIDAN PARK</text><text x="538.0" y="78.0" font-size="18" font-weight="normal" text-anchor="start" fill="#1c1c1c" stroke="#1c1c1c" stroke-width="3.400" stroke-linejoin="round">Terre Haute North</text><text x="538.0" y="78.0" font-size="18" font-weight="normal" text-anchor="start" fill="#fff" stroke="#fff" stroke-width=".45">Terre Haute North</text><text x="545.0" y="95.0" font-size="18" font-weight="normal" text-anchor="start" fill="#1c1c1c" stroke="#1c1c1c" stroke-width="3.400" stroke-linejoin="round">Vigo High School</text><text x="545.0" y="95.0" font-size="18" font-weight="normal" text-anchor="start" fill="#fff" stroke="#fff" stroke-width=".45">Vigo High School</text><text x="410.0" y="468.0" font-size="17.5" font-weight="normal" text-anchor="start" fill="#1c1c1c" stroke="#1c1c1c" stroke-width="3.400" stroke-linejoin="round">Kroger</text><text x="410.0" y="468.0" font-size="17.5" font-weight="normal" text-anchor="start" fill="#fff" stroke="#fff" stroke-width=".45">Kroger</text><text x="-23.1" y="448.5" font-size="16" font-weight="bold" text-anchor="start" fill="#1c1c1c" stroke="#1c1c1c" stroke-width="3.400" stroke-linejoin="round">Indiana</text><text x="-23.1" y="448.5" font-size="16" font-weight="bold" text-anchor="start" fill="#fff" stroke="#fff" stroke-width=".45">Indiana</text><text x="-11.6" y="464.5" font-size="16" font-weight="bold" text-anchor="start" fill="#1c1c1c" stroke="#1c1c1c" stroke-width="3.400" stroke-linejoin="round">University</text><text x="-11.6" y="464.5" font-size="16" font-weight="bold" text-anchor="start" fill="#fff" stroke="#fff" stroke-width=".45">University</text><text x="635.0" y="454.0" font-size="16" font-weight="normal" text-anchor="start" fill="#1c1c1c" stroke="#1c1c1c" stroke-width="3.400" stroke-linejoin="round">av</text><text x="635.0" y="454.0" font-size="16" font-weight="normal" text-anchor="start" fill="#fff" stroke="#fff" stroke-width=".45">av</text></g><g transform="translate(478,460)"><path d="M0 16C-4 9-13 6-13-3A13 13 0 0 1 13-3C13 6 4 9 0 16z" fill="#4a86f0" stroke="#fff" stroke-width="1.500"/><path d="M-7-8h2.500l2 8h7l2-6h-10" fill="none" stroke="#fff" stroke-width="1.500" stroke-linejoin="round"/><circle cx="-2" cy="3" r="1.300" fill="#fff"/><circle cx="4" cy="3" r="1.300" fill="#fff"/></g><path d="M252.5 86.0C249.5 67.0 233.5 46.0 233.5 29.0A19 19 0 0 1 271.5 29.0C271.5 46.0 255.5 67.0 252.5 86.0z" fill="#6e6e6e" stroke="#fff" stroke-width="1.800" stroke-linejoin="round"/><text x="252.5" y="38.0" font-family="Liberation Sans, Arial, sans-serif" font-size="18" fill="#fff" stroke="#fff" stroke-width=".45" text-anchor="middle">5</text><path d="M394.0 129.0C391.0 110.0 375.0 89.0 375.0 72.0A19 19 0 0 1 413.0 72.0C413.0 89.0 397.0 110.0 394.0 129.0z" fill="#6e6e6e" stroke="#fff" stroke-width="1.800" stroke-linejoin="round"/><text x="394.0" y="81.0" font-family="Liberation Sans, Arial, sans-serif" font-size="18" fill="#fff" stroke="#fff" stroke-width=".45" text-anchor="middle">3</text><path d="M446.0 134.0C443.0 115.0 427.0 94.0 427.0 77.0A19 19 0 0 1 465.0 77.0C465.0 94.0 449.0 115.0 446.0 134.0z" fill="#6e6e6e" stroke="#fff" stroke-width="1.800" stroke-linejoin="round"/><text x="446.0" y="86.0" font-family="Liberation Sans, Arial, sans-serif" font-size="18" fill="#fff" stroke="#fff" stroke-width=".45" text-anchor="middle">4</text><path d="M456.2 225.7C453.2 206.7 437.2 185.7 437.2 168.7A19 19 0 0 1 475.2 168.7C475.2 185.7 459.2 206.7 456.2 225.7z" fill="#6e6e6e" stroke="#fff" stroke-width="1.800" stroke-linejoin="round"/><text x="456.2" y="177.7" font-family="Liberation Sans, Arial, sans-serif" font-size="18" fill="#fff" stroke="#fff" stroke-width=".45" text-anchor="middle">2</text><path d="M200.4 420.3C197.4 401.3 181.4 380.3 181.4 363.3A19 19 0 0 1 219.4 363.3C219.4 380.3 203.4 401.3 200.4 420.3z" fill="#6e6e6e" stroke="#fff" stroke-width="1.800" stroke-linejoin="round"/><text x="200.4" y="372.3" font-family="Liberation Sans, Arial, sans-serif" font-size="18" fill="#fff" stroke="#fff" stroke-width=".45" text-anchor="middle">6</text><path d="M301.0 301.2C298.0 282.2 282.0 261.2 282.0 244.2A19 19 0 0 1 320.0 244.2C320.0 261.2 304.0 282.2 301.0 301.2z" fill="#6e6e6e" stroke="#fff" stroke-width="1.800" stroke-linejoin="round"/><text x="301.0" y="253.2" font-family="Liberation Sans, Arial, sans-serif" font-size="18" fill="#fff" stroke="#fff" stroke-width=".45" text-anchor="middle">1</text><path d="M329.2 267.0C326.2 248.0 310.2 227.0 310.2 210.0A19 19 0 0 1 348.2 210.0C348.2 227.0 332.2 248.0 329.2 267.0z" fill="#fd0000" stroke="#fff" stroke-width="1.800" stroke-linejoin="round"/></g><path d="M0 .5H655M.5 0V474M654.500 0V474" stroke="#6f8098" stroke-width="1" fill="none"/></svg><div class="abs" style="left:148.400px;top:463.300px;width:44.300px;height:44.300px;border-radius:50%;background:#fff;border:1px solid #6484b8"></div><svg class="abs" style="left:148.400px;top:463.300px" width="44" height="44" viewBox="0 0 44 44" fill="none" stroke="#5f6b7a" stroke-width="1.900" stroke-linejoin="round" stroke-linecap="round"><path d="M10.600 22.300L26.200 10.600Q27.700 9.500 29 10.600L33.600 14.600Q34.800 15.800 33.600 16.900L18.200 30.300L9.100 31.800Z"/><path d="M23.500 13.600L30.300 19.700"/><path d="M9.100 31.800Q16 37.800 25 34.500"/></svg><div class="abs" style="left:725px;top:463px;width:51px;height:50px;background:#fff;border-radius:2px;box-shadow:0 1px 4px -1px rgba(0,0,0,.3)"></div><svg class="abs" style="left:739px;top:476px" width="24" height="24" viewBox="0 0 24 24" fill="none" stroke="#666" stroke-width="2.600"><path d="M1.300 8V1.300H8M16 1.300h6.700V8M22.700 16v6.700H16M8 22.700H1.300V16"/></svg><div class="abs" style="left:725px;top:644px;width:51px;height:50px;background:#fff;border-radius:2px;box-shadow:0 1px 4px -1px rgba(0,0,0,.3)"></div><svg class="abs" style="left:739px;top:657px" width="24" height="24" viewBox="0 0 24 24" fill="#666"><rect x="0" y="2" width="10" height="8"/><rect x="13" y="2" width="10" height="8"/><rect x="0" y="13" width="10" height="8"/><rect x="13" y="13" width="10" height="8"/></svg><div class="abs" style="left:725px;top:734px;width:51px;height:50px;background:#fff;border-radius:2px;box-shadow:0 1px 4px -1px rgba(0,0,0,.3)"></div><svg class="abs" style="left:738px;top:738px" width="24" height="42" viewBox="0 0 24 42"><path d="M12 14.500c-4.500 0-7.500 1.200-8.500 3.500-.8 1.800-1.800 7-2 9.500-.1 1.300 1.700 1.700 2.100.5l1.900-5.500.5 6 1 11.500c.1 1.300 3.600 1.300 3.800 0l1.200-9 1.200 9c.2 1.300 3.700 1.300 3.800 0l1-11.500.5-6 1.900 5.500c.4 1.200 2.200.8 2.100-.5-.2-2.500-1.200-7.700-2-9.500-1-2.300-4-3.500-8.500-3.500z" fill="#f7b500"/><path d="M7.500 14.800l4.500 5.200 4.500-5.200z" fill="#e8710a"/><circle cx="12" cy="7.500" r="6.300" fill="#f7b500"/></svg><div class="abs" style="left:725px;top:824px;width:51px;height:110px;background:#fff;border-radius:2px;box-shadow:0 1px 4px -1px rgba(0,0,0,.3)"></div><div class="abs" style="left:732px;top:874px;width:37px;height:1px;background:#e6e6e6"></div><svg class="abs" style="left:739px;top:837px" width="24" height="24" viewBox="0 0 24 24" fill="#666"><rect x="0" y="10" width="23" height="3.600"/><rect x="9.700" y="0" width="3.600" height="23"/></svg><svg class="abs" style="left:739px;top:888px" width="24" height="24" viewBox="0 0 24 24" fill="#666"><rect x="0" y="10" width="23" height="3.600"/></svg><div class="abs" style="left:148px;top:860px;width:211px;height:50px;background:#fff;border-radius:2px;box-shadow:0 1px 4px -1px rgba(0,0,0,.3)"></div><div class="abs" style="left:234px;top:860px;width:1px;height:50px;background:#ececec"></div><div class="abs" style="left:169px;top:868.700px;font-size:23px;line-height:30px;color:#565656">Map</div><div class="abs" style="left:256px;top:868.700px;font-size:22.800px;line-height:30px;color:#000;-webkit-text-stroke:.45px #000">Satellite</div><div class="abs" style="left:808px;top:78px;font-size:19.800px;line-height:24px;color:#5f6b7a;white-space:nowrap">Comparable Properties (6) <span style="font-size:17.400px">- 6 Selected</span></div><div class="abs" style="left:817px;top:102px;font-size:16.200px;line-height:20px;color:#5f6b7a;white-space:nowrap">Avg. Sale Price: $30,410, Avg. PPSF: $34.16, Avg. Days On Market: 8</div><div class="btn" style="left:1380px;width:120px">Save Comps</div><div class="btn" style="left:1510px;width:106px">Add to List</div><div class="btn" style="left:1626px;width:81px;border:none;color:#fff;background:linear-gradient(#5eaaf7,#2d7dd4);line-height:39px;font-size:15.500px;letter-spacing:-.3px;box-shadow:0 1px 1px rgba(0,0,0,.15)">Actions</div><svg class="abs" style="left:1716.500px;top:84px" width="23.500" height="23.500" viewBox="0 0 24 24" fill="none" stroke="#4d5560" stroke-width="1.500" stroke-linejoin="round"><circle cx="12" cy="12" r="3.400"/><path d="M10.300 1.800h3.400l.5 2.700 1.900.8 2.300-1.600 2.400 2.400-1.600 2.300.8 1.900 2.700.5v3.400l-2.700.5-.8 1.900 1.600 2.300-2.400 2.400-2.300-1.600-1.900.8-.5 2.700h-3.400l-.5-2.700-1.900-.8-2.300 1.600-2.400-2.400 1.600-2.300-.8-1.900-2.700-.5v-3.400l2.700-.5.8-1.900-1.600-2.300 2.400-2.400 2.300 1.600 1.900-.8z"/></svg><div class="abs" style="left:808px;top:134px;width:932px;height:800px;border:1px solid #a9b0b7;background:#fff"></div><div class="abs" style="left:813px;top:136px;width:927px;height:420px;overflow:hidden"><div class="abs" style="left:0;top:0;width:927px;height:51px;background:#f5f7f7;border-bottom:1px solid #b9c0c6"></div><div class="cb" style="left:7px;top:17.500px"><svg width="13" height="13" viewBox="0 0 13 13" fill="none" stroke="#1f2328" stroke-width="1.700" stroke-linecap="round" stroke-linejoin="round"><path d="M2.500 6.800l2.800 2.900 5.400-6.200"/></svg></div><div class="sep" style="left:70px;top:11.500px;height:19.500px"></div><div class="th" style="left:79px;top:3.500px">Address</div><div class="th" style="left:267px;top:3.500px">Date</div><div class="sep" style="left:358px;top:11.500px;height:19.500px"></div><div class="th" style="left:367px;top:3.500px">Amount</div><div class="sep" style="left:483px;top:11.500px;height:19.500px"></div><div class="th" style="left:492px;top:3.500px">Beds</div><div class="sep" style="left:552px;top:11.500px;height:19.500px"></div><div class="th" style="left:561px;top:3.500px">SqFt</div><div class="sep" style="left:620px;top:11.500px;height:19.500px"></div><div class="th" style="left:629px;top:3.500px">Lot SqFt</div><div class="sep" style="left:689px;top:11.500px;height:19.500px"></div><div class="th" style="left:698px;top:3.500px">PPSF</div><div class="sep" style="left:789px;top:11.500px;height:19.500px"></div><div class="th" style="left:798px;top:3.500px">Distance</div><div class="sep" style="left:889px;top:11.500px;height:19.500px"></div><div class="abs" style="left:258px;top:0;width:1px;height:420px;background:#b9c0c6"></div><div class="row s" style="top:51px;height:54px;border-bottom:1px solid #b9c0c6"><svg class="abs" style="left:40px;top:8px" width="26" height="24" viewBox="0 0 26 24" fill="#4d8df5"><path d="M13 1L0.500 12h3.500v11h6.500v-7h5v7H22V12h3.500L21 8V2h-3v3.300z"/></svg><div class="c" style="left:80px;top:8.75px;letter-spacing:.17px">1924 7th Ave</div><div class="c" style="left:80px;top:26.5px">Terre Haute 47807</div><div class="c" style="left:492px;top:8.75px;letter-spacing:.2px">2</div><div class="c" style="left:561px;top:8.75px;letter-spacing:.2px">833</div><div class="c" style="left:629px;top:8.75px;letter-spacing:.2px">4,922</div><div class="abs" style="left:258px;top:0;width:1px;height:100%;background:#b9c0c6"></div></div><div class="row" style="top:105px;height:54px"><div class="bg"></div><div class="cb" style="left:8.500px;top:12.5px"><svg width="13" height="13" viewBox="0 0 13 13" fill="none" stroke="#1f2328" stroke-width="1.700" stroke-linecap="round" stroke-linejoin="round"><path d="M2.500 6.800l2.800 2.900 5.400-6.200"/></svg></div><div class="c" style="left:59px;top:12.5px">1</div><div class="c" style="left:80px;top:7.5px;letter-spacing:.17px">1638 5th Ave</div><div class="c" style="left:80px;top:26.75px">Terre Haute 47807</div><div class="c" style="left:267px;top:7.5px;letter-spacing:.2px">04/2023</div><div class="c" style="left:367px;top:7.5px;letter-spacing:.2px">$23,930/est</div><div class="c" style="left:492px;top:7.5px;letter-spacing:.2px">2</div><div class="c" style="left:561px;top:7.5px;letter-spacing:.2px">956</div><div class="c" style="left:629px;top:7.5px;letter-spacing:.2px">5,140</div><div class="c" style="left:698px;top:7.5px;letter-spacing:.2px">$25.03</div><div class="c" style="left:798px;top:7.5px;letter-spacing:.2px">0.16</div><div class="abs" style="left:258px;top:0;width:1px;height:100%;background:#b9c0c6"></div></div><div class="row" style="top:159px;height:52px"><div class="bg"></div><div class="cb" style="left:8.500px;top:12px"><svg width="13" height="13" viewBox="0 0 13 13" fill="none" stroke="#1f2328" stroke-width="1.700" stroke-linecap="round" stroke-linejoin="round"><path d="M2.500 6.800l2.800 2.900 5.400-6.200"/></svg></div><div class="c" style="left:59px;top:12px">2</div><div class="c" style="left:80px;top:7px;letter-spacing:.17px">1717 N 25th St</div><div class="c" style="left:80px;top:26.25px">Terre Haute 47804</div><div class="c" style="left:267px;top:7px;letter-spacing:.2px">06/2023</div><div class="c" style="left:367px;top:7px;letter-spacing:.2px">$47,940/est</div><div class="c" style="left:492px;top:7px;letter-spacing:.2px">2</div><div class="c" style="left:561px;top:7px;letter-spacing:.2px">840</div><div class="c" style="left:629px;top:7px;letter-spacing:.2px">5,314</div><div class="c" style="left:698px;top:7px;letter-spacing:.2px">$57.07</div><div class="c" style="left:798px;top:7px;letter-spacing:.2px">0.49</div><div class="abs" style="left:258px;top:0;width:1px;height:100%;background:#b9c0c6"></div></div><div class="row" style="top:211px;height:53px"><div class="bg"></div><div class="cb" style="left:8.500px;top:12px"><svg width="13" height="13" viewBox="0 0 13 13" fill="none" stroke="#1f2328" stroke-width="1.700" stroke-linecap="round" stroke-linejoin="round"><path d="M2.500 6.800l2.800 2.900 5.400-6.200"/></svg></div><div class="c" style="left:59px;top:12px">3</div><div class="c" style="left:80px;top:7px;letter-spacing:.17px">2132 Blaine Ave</div><div class="c" style="left:80px;top:26.25px">Terre Haute 47804</div><div class="c" style="left:267px;top:7px;letter-spacing:.2px">08/2023</div><div class="c" style="left:367px;top:7px;letter-spacing:.2px">$20,710/est</div><div class="c" style="left:492px;top:7px;letter-spacing:.2px">2</div><div class="c" style="left:561px;top:7px;letter-spacing:.2px">986</div><div class="c" style="left:629px;top:7px;letter-spacing:.2px">15,159</div><div class="c" style="left:698px;top:7px;letter-spacing:.2px">$21</div><div class="c" style="left:798px;top:7px;letter-spacing:.2px">0.56</div><div class="abs" style="left:258px;top:0;width:1px;height:100%;background:#b9c0c6"></div></div><div class="row" style="top:264px;height:52px"><div class="bg"></div><div class="cb" style="left:8.500px;top:12px"><svg width="13" height="13" viewBox="0 0 13 13" fill="none" stroke="#1f2328" stroke-width="1.700" stroke-linecap="round" stroke-linejoin="round"><path d="M2.500 6.800l2.800 2.900 5.400-6.200"/></svg></div><div class="c" style="left:59px;top:12px">4</div><div class="c" style="left:80px;top:7px;letter-spacing:.17px">2136 N 25th St</div><div class="c" style="left:80px;top:26.25px">Terre Haute 47804</div><div class="c" style="left:267px;top:7px;letter-spacing:.2px">04/2023</div><div class="c" style="left:367px;top:7px;letter-spacing:.2px">$2,810/est</div><div class="c" style="left:492px;top:7px;letter-spacing:.2px">2</div><div class="c" style="left:561px;top:7px;letter-spacing:.2px">912</div><div class="c" style="left:629px;top:7px;letter-spacing:.2px">14,767</div><div class="c" style="left:698px;top:7px;letter-spacing:.2px">$3.08</div><div class="c" style="left:798px;top:7px;letter-spacing:.2px">0.65</div><div class="abs" style="left:258px;top:0;width:1px;height:100%;background:#b9c0c6"></div></div><div class="row" style="top:316px;height:53px"><div class="bg"></div><div class="cb" style="left:8.500px;top:12px"><svg width="13" height="13" viewBox="0 0 13 13" fill="none" stroke="#1f2328" stroke-width="1.700" stroke-linecap="round" stroke-linejoin="round"><path d="M2.500 6.800l2.800 2.900 5.400-6.200"/></svg></div><div class="c" style="left:59px;top:12px">5</div><div class="c" style="left:80px;top:7px;letter-spacing:.17px">1509 Woodley Ave</div><div class="c" style="left:80px;top:26.25px">Terre Haute 47804</div><div class="c" style="left:267px;top:7px;letter-spacing:.2px">11/2022</div><div class="c" style="left:367px;top:7px;letter-spacing:.2px">$72,090/est</div><div class="c" style="left:492px;top:7px;letter-spacing:.2px">2</div><div class="c" style="left:561px;top:7px;letter-spacing:.2px">864</div><div class="c" style="left:629px;top:7px;letter-spacing:.2px">5,401</div><div class="c" style="left:698px;top:7px;letter-spacing:.2px">$83.44</div><div class="c" style="left:798px;top:7px;letter-spacing:.2px">0.72</div><div class="abs" style="left:258px;top:0;width:1px;height:100%;background:#b9c0c6"></div></div><div class="row" style="top:369px;height:53px"><div class="bg"></div><div class="cb" style="left:8.500px;top:12px"><svg width="13" height="13" viewBox="0 0 13 13" fill="none" stroke="#1f2328" stroke-width="1.700" stroke-linecap="round" stroke-linejoin="round"><path d="M2.500 6.800l2.800 2.900 5.400-6.200"/></svg></div><div class="c" style="left:59px;top:12px">6</div><div class="c" style="left:80px;top:7px;letter-spacing:.17px">705 N 13th 1/2 St</div><div class="c" style="left:80px;top:26.25px">Terre Haute 47807</div><div class="c" style="left:267px;top:7px;letter-spacing:.2px">05/2023</div><div class="c" style="left:367px;top:7px;letter-spacing:.2px">$14,980/est</div><div class="c" style="left:492px;top:7px;letter-spacing:.2px">2</div><div class="c" style="left:561px;top:7px;letter-spacing:.2px">976</div><div class="c" style="left:629px;top:7px;letter-spacing:.2px">3,920</div><div class="c" style="left:698px;top:7px;letter-spacing:.2px">$15.35</div><div class="c" style="left:798px;top:7px;letter-spacing:.2px">0.73</div><div class="abs" style="left:258px;top:0;width:1px;height:100%;background:#b9c0c6"></div></div></div><div class="abs" style="left:808px;top:130px;width:936px;height:428px;border:4px solid #ff0000;border-radius:4.500px;box-shadow:0 1px 1px rgba(0,0,0,.25)"></div><svg class="abs" style="left:1041.500px;top:843.500px" width="16" height="22" viewBox="0 0 16 22"><path d="M1.500 1.500v15.500l3.600-3.400 2.600 6 2.300-1-2.600-5.800h5z" fill="#fff" stroke="#000" stroke-width="1.100" stroke-linejoin="round"/></svg>
</div>
</body>
</html>
